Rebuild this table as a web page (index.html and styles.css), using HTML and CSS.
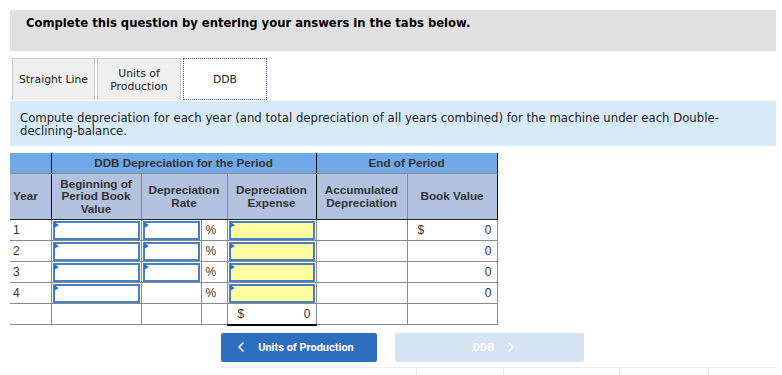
FILE: index.html
```html
<!DOCTYPE html>
<html lang="en">
<head>
<meta charset="utf-8">
<title>DDB depreciation</title>
<link rel="stylesheet" href="styles.css">
</head>
<body>
<div class="page">
  <div class="banner">Complete this question by entering your answers in the tabs below.</div>

  <div class="tabs">
    <div class="tab">Straight Line</div>
    <div class="tab">Units of<br>Production</div>
    <div class="tab tab-active">DDB</div>
  </div>

  <div class="prompt">Compute depreciation for each year (and total depreciation of all years combined) for the machine under each Double-declining-balance.</div>

  <table class="sheet">
    <colgroup>
      <col class="c-year"><col class="c-begin"><col class="c-rate"><col class="c-pct"><col class="c-exp"><col class="c-acc"><col class="c-book">
    </colgroup>
    <thead>
      <tr class="group-row">
        <th class="dark-r"></th>
        <th colspan="4" class="dark-r">DDB Depreciation for the Period</th>
        <th colspan="2" class="dark-r">End of Period</th>
      </tr>
      <tr class="label-row">
        <th class="dark-r left">Year</th>
        <th>Beginning of<br>Period Book<br>Value</th>
        <th colspan="2">Depreciation<br>Rate</th>
        <th class="dark-r">Depreciation<br>Expense</th>
        <th>Accumulated<br>Depreciation</th>
        <th class="dark-r">Book Value</th>
      </tr>
    </thead>
    <tbody>
      <tr>
        <td class="yr">1</td>
        <td class="in"><span class="field"></span></td>
        <td class="in"><span class="field"></span></td>
        <td class="pct">%</td>
        <td class="in"><span class="field yellow"></span></td>
        <td></td>
        <td class="money"><span>$</span><span>0</span></td>
      </tr>
      <tr>
        <td class="yr">2</td>
        <td class="in"><span class="field"></span></td>
        <td class="in"><span class="field"></span></td>
        <td class="pct">%</td>
        <td class="in"><span class="field yellow"></span></td>
        <td></td>
        <td class="money"><span></span><span>0</span></td>
      </tr>
      <tr>
        <td class="yr">3</td>
        <td class="in"><span class="field"></span></td>
        <td class="in"><span class="field"></span></td>
        <td class="pct">%</td>
        <td class="in"><span class="field yellow"></span></td>
        <td></td>
        <td class="money"><span></span><span>0</span></td>
      </tr>
      <tr>
        <td class="yr">4</td>
        <td class="in"><span class="field"></span></td>
        <td></td>
        <td class="pct">%</td>
        <td class="in"><span class="field yellow"></span></td>
        <td></td>
        <td class="money"><span></span><span>0</span></td>
      </tr>
      <tr class="total-row">
        <td></td>
        <td></td>
        <td></td>
        <td></td>
        <td class="money total"><span>$</span><span>0</span></td>
        <td></td>
        <td></td>
      </tr>
    </tbody>
  </table>

  <div class="nav">
    <button class="btn btn-primary" type="button">
      <svg class="chev" width="6" height="10" viewBox="0 0 6 10"><path d="M5 1 1 5l4 4" fill="none" stroke="#fff" stroke-width="1.6" stroke-linecap="round" stroke-linejoin="round"/></svg>
      <span>Units of Production</span>
    </button>
    <button class="btn btn-disabled" type="button">
      <span>DDB</span>
      <svg class="chev" width="6" height="10" viewBox="0 0 6 10"><path d="M1 1l4 4-4 4" fill="none" stroke="#fff" stroke-width="1.6" stroke-linecap="round" stroke-linejoin="round"/></svg>
    </button>
  </div>

  <div class="footer-strip">
    <div class="seg seg-a"></div>
    <div class="seg seg-b"></div>
    <div class="seg seg-c"></div>
    <div class="seg seg-d"></div>
    <div class="seg seg-e"></div>
  </div>
</div>
</body>
</html>
```

FILE: styles.css
```css
html, body {
  margin: 0;
  padding: 0;
  background: #fff;
}

.page {
  padding: 10px 6px 0 10px;
  font-family: "DejaVu Sans", Verdana, sans-serif;
  color: #222;
}

/* grey instruction banner */
.banner {
  height: 41px;
  box-sizing: border-box;
  padding: 6px 0 0 16px;
  background: #e0e0e0;
  font-size: 11.6px;
  line-height: 15px;
  font-weight: bold;
  color: #000;
}

/* tab strip */
.tabs {
  display: flex;
  gap: 2px;
  margin-top: 7px;
  padding-left: 2px;
  height: 43px;
}

.tab {
  width: 84px;
  height: 42px;
  box-sizing: border-box;
  display: flex;
  align-items: center;
  justify-content: center;
  text-align: center;
  background: #efefef;
  border: 1px solid #c9c9c9;
  border-bottom: none;
  font-size: 10.8px;
  line-height: 13px;
  color: #222;
}

.tab:first-child {
  width: 83px;
}

.tab-active {
  background: #fff;
  border: 1px dotted #3f66ad;
}

/* blue prompt box */
.prompt {
  background: #d7eaf9;
  height: 45px;
  box-sizing: border-box;
  padding: 11px 50px 0 10px;
  font-size: 11.7px;
  line-height: 13px;
  color: #222;
}

/* depreciation worksheet */
.sheet {
  margin-top: 7px;
  border-collapse: collapse;
  table-layout: fixed;
  width: 487px;
  font-family: "Liberation Sans", Arial, sans-serif;
  color: #333;
}

.c-year { width: 41px; }
.c-begin { width: 90px; }
.c-rate { width: 60px; }
.c-pct { width: 26px; }
.c-exp { width: 89px; }
.c-acc { width: 91px; }
.c-book { width: 90px; }

.sheet th {
  font-size: 11.7px;
  font-weight: bold;
  padding: 0;
  text-align: center;
  border-left: 1px solid #8a8a8a;
  border-right: 1px solid #8a8a8a;
}

.group-row th {
  height: 20px;
  background: #6fa9e9;
  border-bottom: 1px solid #8a8a8a;
  line-height: 14px;
}

.label-row th {
  height: 45px;
  background: #b1c1de;
  line-height: 12.6px;
  border-bottom: 1px solid #222;
}

.sheet th:first-child {
  border-left: none;
}

.sheet th.dark-r {
  border-right: 1px solid #111;
}

.sheet th.left {
  text-align: left;
  padding-left: 3px;
}

.sheet td {
  height: 21px;
  box-sizing: border-box;
  padding: 0;
  font-size: 12px;
  border: 1px solid #8a8a8a;
  vertical-align: middle;
}

.sheet td:first-child {
  border-left: none;
}

.sheet td.yr {
  padding-left: 3px;
}

.sheet td.pct {
  padding-left: 4px;
}

.sheet td.in {
  padding: 0 1px;
}

/* answer entry boxes with their corner flag */
.field {
  position: relative;
  display: block;
  height: 19px;
  box-sizing: border-box;
  border: 2px solid #4a7fc2;
  background: #fff;
}

.field::before {
  content: "";
  position: absolute;
  left: -1px;
  top: -1px;
  width: 0;
  height: 0;
  border-left: 5px solid #2f6fc2;
  border-top: 3px solid transparent;
  border-bottom: 3px solid transparent;
}

.field.yellow {
  background: #ffff9f;
}

.money span:first-child {
  float: left;
  padding-left: 10px;
}

.money span:last-child {
  float: right;
  padding-right: 5px;
}

.total-row td {
  border-bottom: 1px solid #8a8a8a;
}

.sheet td.total {
  border-top: 1px solid #222;
  border-bottom: 2px solid #000;
}

/* previous / next buttons */
.nav {
  display: flex;
  gap: 18px;
  margin-top: 7px;
  padding-left: 211px;
}

.btn {
  height: 29px;
  border: none;
  border-radius: 2px;
  display: flex;
  align-items: center;
  justify-content: center;
  gap: 14px;
  font-family: Roboto, "Liberation Sans", sans-serif;
  font-size: 11px;
  font-weight: bold;
  color: #fff;
  padding: 0;
}

.btn-primary {
  width: 156px;
  background: #2d6ebf;
  padding-right: 6px;
}

.btn-disabled {
  width: 189px;
  background: #d5e3f2;
  padding-left: 8px;
}

/* faint rule under the buttons */
.footer-strip {
  display: flex;
  margin-top: 5px;
  margin-left: 210px;
  height: 8px;
  border-top: 1px solid #ececec;
}

.seg + .seg {
  border-left: 1px solid #ececec;
}

.seg-a { width: 196px; }
.seg-b { width: 86px; }
.seg-c { width: 115px; }
.seg-d { width: 88px; }
.seg-e { flex: 1; }
```
